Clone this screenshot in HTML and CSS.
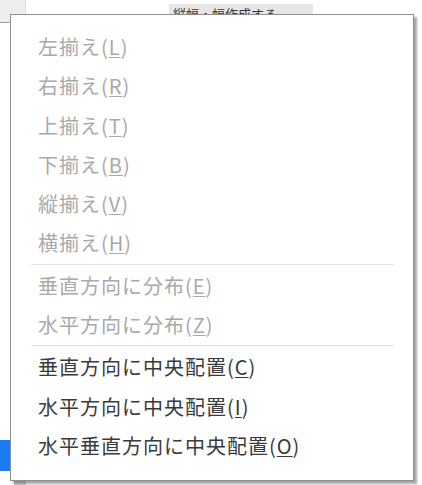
FILE: index.html
```html
<!DOCTYPE html>
<html lang="ja">
<head>
    <meta charset="UTF-8">
    <title>配置メニュー</title>
    <link rel="stylesheet" href="styles.css">
</head>
<body>
    <div class="page">
        <div class="corner-tab"></div>
        <div class="title-chip">縦幅・幅作成する</div>
        <div class="side-button"></div>
        <div class="under-strip"></div>

        <ul class="context-menu">
            <li class="item disabled">左揃え(<u>L</u>)</li>
            <li class="item disabled">右揃え(<u>R</u>)</li>
            <li class="item disabled">上揃え(<u>T</u>)</li>
            <li class="item disabled">下揃え(<u>B</u>)</li>
            <li class="item disabled">縦揃え(<u>V</u>)</li>
            <li class="item disabled">横揃え(<u>H</u>)</li>
            <li class="separator"></li>
            <li class="item disabled">垂直方向に分布(<u>E</u>)</li>
            <li class="item disabled">水平方向に分布(<u>Z</u>)</li>
            <li class="separator"></li>
            <li class="item">垂直方向に中央配置(<u>C</u>)</li>
            <li class="item">水平方向に中央配置(<u>I</u>)</li>
            <li class="item">水平垂直方向に中央配置(<u>O</u>)</li>
        </ul>
    </div>
</body>
</html>
```

FILE: styles.css
```css
body {
    margin: 0;
    width: 422px;
    height: 485px;
    overflow: hidden;
    background-color: #ffffff;
    font-family: "Noto Sans CJK JP", "Noto Sans", sans-serif;
}

.page {
    position: relative;
    width: 100%;
    height: 100%;
}

.corner-tab {
    width: 25px;
    height: 22px;
    background-color: #eeeeee;
    border-right: 1px solid #dddddd;
    border-bottom: 1px solid #999999;
}

/* header text sitting behind the menu */
.title-chip {
    position: absolute;
    top: 4px;
    left: 169px;
    width: 144px;
    height: 14px;
    background-color: #e6e6e6;
    color: #333;
    font-size: 13px;
    line-height: 20px;
    padding-left: 4px;
    box-sizing: border-box;
    overflow: hidden;
}

.side-button {
    position: absolute;
    left: 0;
    top: 440px;
    width: 11px;
    height: 31px;
    background-color: #1a7cf0;
}

.under-strip {
    position: absolute;
    left: 14px;
    top: 480px;
    width: 12px;
    height: 5px;
    background-color: #d8d8d8;
}

.context-menu {
    position: absolute;
    top: 14px;
    left: 10px;
    width: 404px;
    height: 467px;
    margin: 0;
    padding: 12px 0 0 0;
    list-style: none;
    box-sizing: border-box;
    background-color: #ffffff;
    border: 1px solid #8f8f8f;
    box-shadow: 3px 3px 2px rgba(0, 0, 0, 0.35);
}

.item {
    height: 39.3px;
    line-height: 39.3px;
    padding-left: 27px;
    font-size: 20px;
    letter-spacing: 1px;
    color: #3a3a3a;
    white-space: nowrap;
}

.item u {
    text-underline-offset: 2px;
    text-decoration-thickness: 1px;
}

.item.disabled {
    color: #a9a9a9;
}

.separator {
    height: 1px;
    margin: 1px 19px 1px 20px;
    background-color: #e3e3e3;
}
```
